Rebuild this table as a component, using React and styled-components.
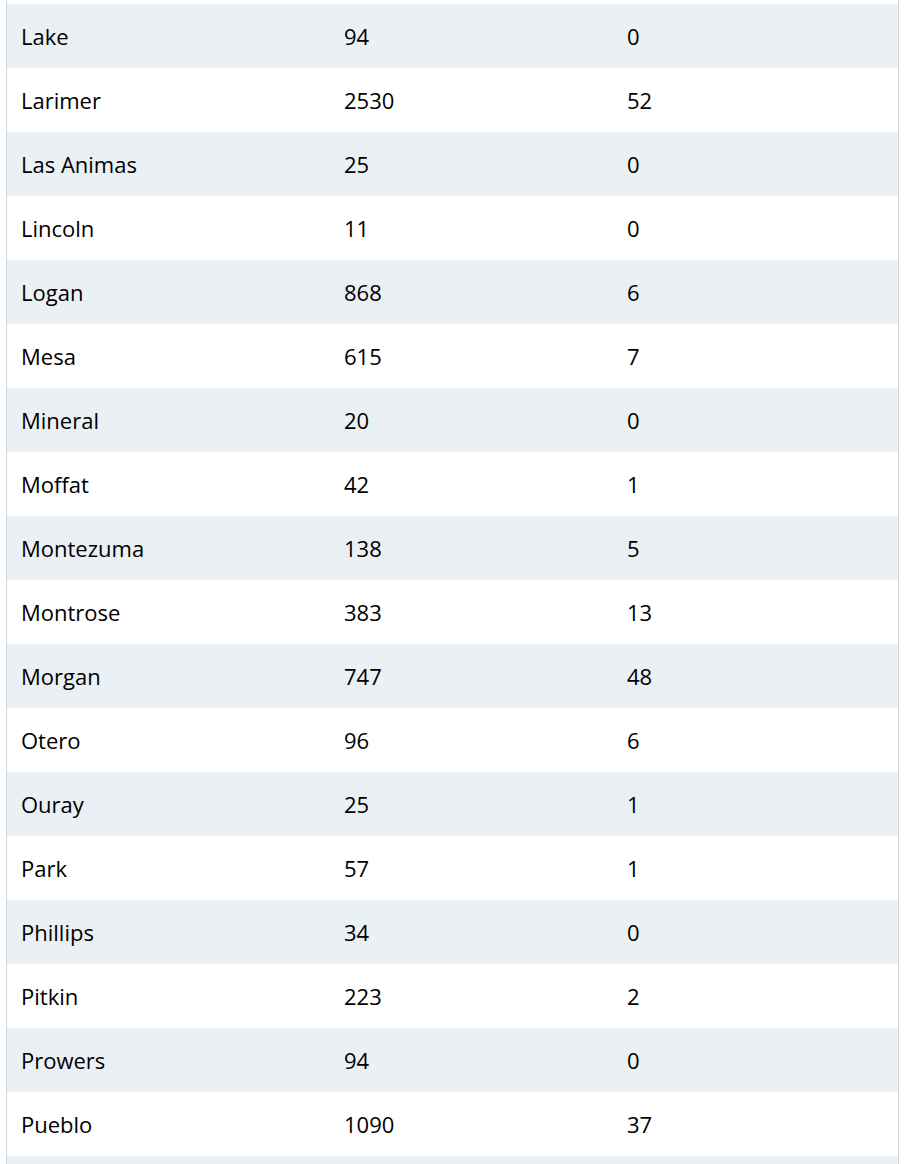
import React from "react";
import styled, { createGlobalStyle } from "styled-components";

const GlobalStyle = createGlobalStyle`
  html, body {
    margin: 0;
    padding: 0;
    background: #ffffff;
  }
  body {
    font-family: "Open Sans", "Liberation Sans", sans-serif;
  }
`;

const Frame = styled.div`
  margin: 0 6px;
  padding-top: 4px;
  border-left: 1px solid #cfd5db;
  border-right: 1px solid #cfd5db;
`;

const Table = styled.table`
  width: 100%;
  border-collapse: collapse;
  table-layout: fixed;
  font-size: 22px;
  color: #000000;
`;

const Row = styled.tr`
  height: 64px;
  background: ${(p) => (p.$striped ? "#ebf0f5" : "#ffffff")};
`;

const Cell = styled.td`
  padding: 0 15px 0 ${(p) => (p.$lead ? "14px" : "15px")};
  vertical-align: middle;
  white-space: nowrap;
`;

const rows = [
  ["Lake", "94", "0"],
  ["Larimer", "2530", "52"],
  ["Las Animas", "25", "0"],
  ["Lincoln", "11", "0"],
  ["Logan", "868", "6"],
  ["Mesa", "615", "7"],
  ["Mineral", "20", "0"],
  ["Moffat", "42", "1"],
  ["Montezuma", "138", "5"],
  ["Montrose", "383", "13"],
  ["Morgan", "747", "48"],
  ["Otero", "96", "6"],
  ["Ouray", "25", "1"],
  ["Park", "57", "1"],
  ["Phillips", "34", "0"],
  ["Pitkin", "223", "2"],
  ["Prowers", "94", "0"],
  ["Pueblo", "1090", "37"],
  ["", "", ""],
];

export default function App() {
  return (
    <>
      <GlobalStyle />
      <Frame>
        <Table>
          <colgroup>
            <col style={{ width: "322px" }} />
            <col style={{ width: "283px" }} />
            <col />
          </colgroup>
          <tbody>
            {rows.map((r, i) => (
              <Row key={i} $striped={i % 2 === 0}>
                <Cell $lead>{r[0]}</Cell>
                <Cell>{r[1]}</Cell>
                <Cell>{r[2]}</Cell>
              </Row>
            ))}
          </tbody>
        </Table>
      </Frame>
    </>
  );
}
